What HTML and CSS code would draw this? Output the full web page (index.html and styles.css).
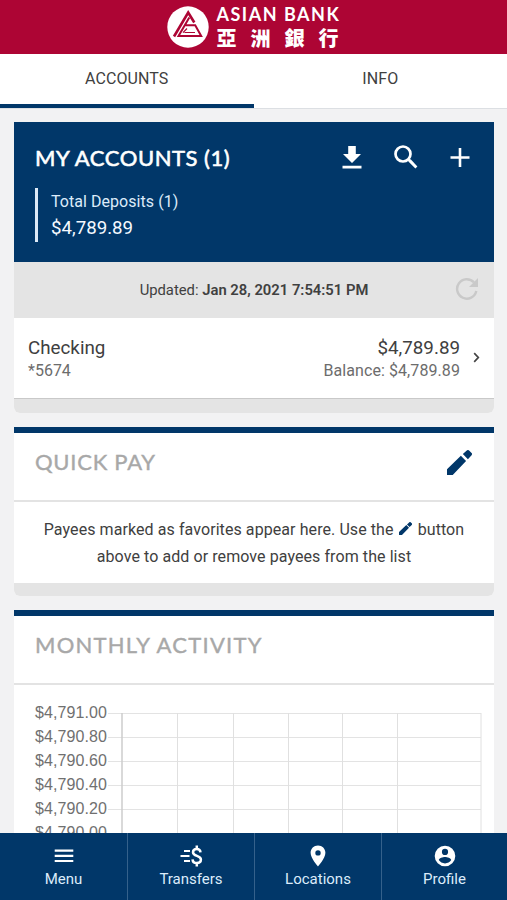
FILE: index.html
```
<!DOCTYPE html>
<html lang="en">
<head>
<meta charset="utf-8">
<meta name="viewport" content="width=device-width, initial-scale=1">
<title>Asian Bank</title>
<link rel="stylesheet" href="styles.css">
</head>
<body>
<div class="app">
  <header class="brand">
    <svg class="brand-mark" viewBox="0 0 42 42" aria-hidden="true">
      <circle cx="21" cy="21" r="20.700" fill="#fff"/>
      <path d="M27.300 16.500L21.200 6.500 7 30.500" fill="none" stroke="#ad0534" stroke-width="2.600"/>
      <path d="M22.300 11.500L11.500 30H34.200L28.200 19.300H18.500" fill="none" stroke="#ad0534" stroke-width="2"/>
      <path d="M16 26.700L20 22.500M17.500 26.500H28" fill="none" stroke="#ad0534" stroke-width="1.200"/>
    </svg>
    <div class="brand-name">
      <span class="brand-en">ASIAN BANK</span>
      <span class="brand-zh" lang="zh-Hant">亞洲銀行</span>
    </div>
  </header>

  <nav class="tabs">
    <a class="tab active">ACCOUNTS</a>
    <a class="tab">INFO</a>
  </nav>

  <main class="content">
    <section class="card">
      <div class="summary">
        <div class="summary-head">
          <h2 class="title">MY ACCOUNTS (1)</h2>
          <div class="actions">
            <svg viewBox="0 0 24 24" aria-hidden="true"><path d="M8.200 1h7.600v8H21l-9 9-9-9h5.200zM2.500 20.800h19v2.700h-19z"/></svg>
            <svg viewBox="0 0 24 24" aria-hidden="true"><circle cx="9" cy="9" r="7.500" fill="none" stroke="#fff" stroke-width="2.700"/><path d="M13.800 14.900l1.200-1.200 1.900.8 6.500 6.900-2 2-6.800-6.600z"/></svg>
            <svg viewBox="0 0 24 24" aria-hidden="true"><path d="M10.700 3h2.600v8.200h8.200v2.600h-8.200V22h-2.600v-8.200H2.500v-2.600h8.200z"/></svg>
          </div>
        </div>
        <div class="deposits">
          <span class="deposits-label">Total Deposits (1)</span>
          <span class="deposits-sum">$4,789.89</span>
        </div>
      </div>
      <div class="updated">
        <span class="updated-text">Updated: <b>Jan 28, 2021 7:54:51 PM</b></span>
        <svg class="refresh" viewBox="0 0 24 24" aria-hidden="true"><path d="M19 5.400A9.700 9.700 0 1 0 21.300 14" fill="none" stroke="#c9c9c9" stroke-width="2.400"/><path d="M23 1v9h-9z" fill="#c9c9c9"/></svg>
      </div>
      <div class="account">
        <div class="account-col">
          <span class="account-main">Checking</span>
          <span class="account-sub">*5674</span>
        </div>
        <div class="account-col right">
          <span class="account-main">$4,789.89</span>
          <span class="account-sub">Balance: $4,789.89</span>
        </div>
        <svg class="chevron" viewBox="0 0 7 11" aria-hidden="true"><path d="M1.200 1.200L5.300 5.500 1.200 9.800" fill="none" stroke="#444" stroke-width="1.700"/></svg>
      </div>
      <div class="card-foot"></div>
    </section>

    <section class="card barred">
      <div class="card-head">
        <h2 class="title muted pay">QUICK PAY</h2>
        <svg class="pencil" viewBox="0 0 24 24" aria-hidden="true"><path d="M0 18.500V24h5.500L18.300 10.500l-5-5zM23.600 5a1.600 1.600 0 0 0 0-2.200L21.200.5a1.600 1.600 0 0 0-2.200 0L15.200 3.900l4.900 4.900z"/></svg>
      </div>
      <p class="hint">Payees marked as favorites appear here. Use the <svg class="pencil-inline" viewBox="0 0 24 24" aria-hidden="true"><path d="M0 18.500V24h5.500L18.500 10.500l-5-5zM24 5a1.600 1.600 0 0 0 0-2.200L21.400.3a1.600 1.600 0 0 0-2.200 0L14.700 4.400l4.900 4.900z"/></svg> button<br>above to add or remove payees from the list</p>
      <div class="card-foot short"></div>
    </section>

    <section class="card barred">
      <div class="card-head">
        <h2 class="title muted month">MONTHLY ACTIVITY</h2>
      </div>
      <div class="chart">
        <div class="axis">
          <span>$4,791.00</span><span>$4,790.80</span><span>$4,790.60</span><span>$4,790.40</span><span>$4,790.20</span><span>$4,790.00</span>
        </div>
        <svg class="plot" viewBox="0 0 374 140" aria-hidden="true">
          <path d="M0 13.500H373M0 37.500H373M0 61.500H373M0 85.500H373M0 109.500H373M0 133.500H373" stroke="#e3e3e3"/>
          <path d="M69.500 13V140M125.500 13V140M180.500 13V140M234.500 13V140M289.500 13V140M373 13V140" stroke="#e0e0e0"/>
          <path d="M14 13V140" stroke="#ccc" stroke-width="1.500"/>
        </svg>
      </div>
    </section>
  </main>

  <nav class="bottom">
    <a class="item"><svg viewBox="0 0 24 24" aria-hidden="true"><path d="M2.700 5.500h18.600v2.200H2.700zM2.700 10.700h18.600v2.200H2.700zM2.700 15.900h18.600v2.200H2.700z"/></svg><span>Menu</span></a>
    <a class="item"><svg viewBox="0 0 24 24" aria-hidden="true"><path d="M5 6h6v2H5zM1.500 11h9v2h-9zM5 16h6v2H5z"/><path d="M21.500 8.400C21.300 6 19.800 4.900 17.800 4.900c-2.200 0-3.800 1.200-3.800 3.300 0 4.500 7.900 2.800 7.900 7.300 0 2.300-1.700 3.500-4.100 3.500s-4.100-1.200-4.300-3.700M17.800 1.500v3.500M17.800 18.500V22.500" fill="none" stroke="#fff" stroke-width="2.500"/></svg><span>Transfers</span></a>
    <a class="item"><svg viewBox="0 0 24 24" aria-hidden="true"><path fill-rule="evenodd" d="M12 1.500c-4.200 0-7.400 3.200-7.400 7.300C4.600 14.300 12 22.500 12 22.500s7.400-8.200 7.400-13.700c0-4.100-3.200-7.300-7.400-7.300zm0 4.700a2.700 2.700 0 1 1 0 5.400 2.700 2.700 0 0 1 0-5.400z"/></svg><span>Locations</span></a>
    <a class="item"><svg viewBox="0 0 24 24" aria-hidden="true"><path fill-rule="evenodd" d="M12 1.700a10.300 10.300 0 1 0 0 20.600 10.300 10.300 0 0 0 0-20.600zm0 3.100a3.100 3.100 0 1 1 0 6.200 3.100 3.100 0 0 1 0-6.200zm0 14.600c-2.600 0-4.900-1.300-6.200-3.300.03-2 4.100-3.200 6.200-3.200s6.200 1.200 6.200 3.200a7.400 7.400 0 0 1-6.200 3.300z"/></svg><span>Profile</span></a>
  </nav>
</div>
</body>
</html>
```
FILE: styles.css
```
* { box-sizing: border-box; }

body {
  margin: 0;
  background: #f2f2f3;
  color: #404040;
  font: 16px/20px Roboto, "Liberation Sans", sans-serif;
}

.app {
  display: flex;
  flex-direction: column;
  height: 900px;
  overflow: hidden;
}

.brand {
  flex: none;
  display: flex;
  justify-content: center;
  gap: 8px;
  height: 54px;
  padding-top: 6px;
  background: #ad0534;
  color: #fff;
}

.brand-mark { width: 42px; height: 42px; }

.brand-name { display: flex; flex-direction: column; width: 124px; }

.brand-en {
  font: 700 18px/16px Lato, sans-serif;
  letter-spacing: 1.500px;
  white-space: nowrap;
}

.brand-zh {
  margin-top: 3px;
  font: 900 20px/25px "Noto Sans CJK TC", sans-serif;
  letter-spacing: 14px;
  white-space: nowrap;
}

.tabs {
  flex: none;
  display: flex;
  height: 55px;
  background: #fff;
  border-bottom: 1px solid #dcdfe3;
}

.tab {
  flex: 1;
  height: 54px;
  padding-top: 15px;
  border-bottom: 4px solid transparent;
  text-align: center;
  letter-spacing: 0.100px;
}

.tab.active { border-color: #013769; }

.content {
  flex: 1;
  display: flex;
  flex-direction: column;
  gap: 14px;
  min-height: 0;
  padding: 13px 13px 0 14px;
  overflow: hidden;
}

.card {
  flex: none;
  background: #fff;
  border-radius: 0 0 6px 6px;
  overflow: hidden;
}

.barred { border-top: 6px solid #013769; }

.summary {
  height: 140px;
  padding: 20px 21px 0;
  background: #013769;
  color: #fff;
}

.summary-head, .card-head {
  display: flex;
  justify-content: space-between;
}

.title {
  margin: 0;
  font: 400 22px/31px Lato, sans-serif;
  letter-spacing: 0.550px;
  white-space: nowrap;
  -webkit-text-stroke: 0.600px currentColor;
}

.title.muted { color: #a8a8a8; -webkit-text-stroke-width: 0.400px; }
.title.pay { letter-spacing: 0.750px; }
.title.month { letter-spacing: 1.250px; }

.actions { display: flex; gap: 30px; padding: 3px 1px 0 0; }
.actions svg { width: 24px; height: 24px; fill: #fff; }

.deposits {
  display: flex;
  flex-direction: column;
  height: 54px;
  margin-top: 15px;
  padding-left: 13px;
  border-left: 3px solid #dce9f7;
}

.summary-head { height: 31px; }

.deposits-label { line-height: 27px; color: #dcebfa; letter-spacing: 0.050px; }
.deposits-sum { font-size: 18.700px; line-height: 26px; color: #f4f9ff; }

.updated {
  position: relative;
  height: 56px;
  padding-top: 18px;
  background: #e4e4e4;
  text-align: center;
  font-size: 14.800px;
}

.updated b { font-weight: 600; }

.refresh {
  position: absolute;
  top: 15px;
  right: 15px;
  width: 24px;
  height: 24px;
}

.account {
  display: flex;
  height: 81px;
  padding: 19px 14px 0;
  border-bottom: 1px solid #c9c9c9;
}

.account-col { display: flex; flex-direction: column; }
.account-col.right { flex: 1; align-items: flex-end; }
.account-main { font-size: 18.800px; line-height: 23px; }
.account-sub { font-size: 16px; line-height: 22px; color: #6c6c6c; }
.account-col.right .account-sub { letter-spacing: 0.080px; }
.chevron { width: 7px; height: 11px; margin: 15px 0 0 13px; }

.card-foot { height: 14px; background: #e4e4e4; }
.card-foot.short { height: 13px; }

.card-head {
  height: 69px;
  padding: 13px 21px 0;
  border-bottom: 2px solid #e3e3e3;
}

.pencil { width: 25px; height: 25px; margin: 4px 1px 0 0; fill: #013769; }

.hint {
  height: 81px;
  margin: 0;
  padding-top: 14px;
  text-align: center;
  line-height: 27px;
  letter-spacing: 0.080px;
  white-space: nowrap;
}

.pencil-inline { width: 13px; height: 13px; margin: 0 2px 0 1px; fill: #013769; vertical-align: 0; }

.chart {
  display: flex;
  height: 170px;
  padding: 15px 12px 0 21px;
}

.axis {
  display: flex;
  flex-direction: column;
  width: 73px;
  padding-top: 1px;
  font: 16px/24px "Liberation Sans", sans-serif;
  letter-spacing: 0.100px;
  color: #707070;
}

.plot { width: 374px; height: 140px; }

.bottom {
  flex: none;
  display: flex;
  height: 67px;
  background: #013769;
  color: #dcecfb;
}

.item {
  flex: 0 0 127px;
  display: flex;
  flex-direction: column;
  align-items: center;
  padding-top: 11px;
  border-left: 1px solid #35618b;
  font-size: 15px;
}

.item:first-child { border-left: 0; }
.item:last-child { flex: 1; }
.item svg { width: 24px; height: 24px; fill: #fff; }
.item span { line-height: 22px; }
```
